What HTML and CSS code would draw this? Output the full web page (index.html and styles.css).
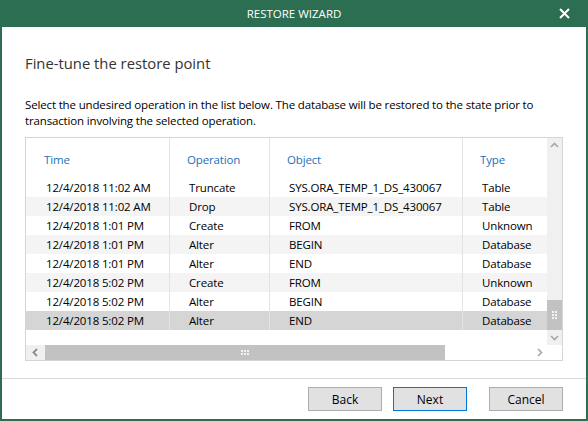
FILE: index.html
```html
<!DOCTYPE html>
<html lang="en">

<head>
    <meta charset="UTF-8">
    <title>Restore Wizard</title>
    <link rel="stylesheet" href="styles.css">
</head>

<body>
    <div class="window">
        <header class="titlebar">
            <span class="title">RESTORE WIZARD</span>
            <span class="close">
                <svg width="11" height="11" viewBox="0 0 11 11"><path d="M1 1 L10 10 M10 1 L1 10" stroke="#fff" stroke-width="2"/></svg>
            </span>
        </header>

        <div class="content">
            <h1 class="heading">Fine-tune the restore point</h1>
            <p class="desc">Select the undesired operation in the list below. The database will be restored to the state prior to<br>transaction involving the selected operation.</p>

            <div class="listbox">
                <div class="list-main">
                    <div class="grid">
                        <div class="hcell">Time</div>
                        <div class="hcell sep">Operation</div>
                        <div class="hcell sep">Object</div>
                        <div class="hcell sep">Type</div>

                        <div class="cell">12/4/2018 11:02 AM</div>
                        <div class="cell sep">Truncate</div>
                        <div class="cell sep">SYS.ORA_TEMP_1_DS_430067</div>
                        <div class="cell sep">Table</div>

                        <div class="cell alt">12/4/2018 11:02 AM</div>
                        <div class="cell sep alt">Drop</div>
                        <div class="cell sep alt">SYS.ORA_TEMP_1_DS_430067</div>
                        <div class="cell sep alt">Table</div>

                        <div class="cell">12/4/2018 1:01 PM</div>
                        <div class="cell sep">Create</div>
                        <div class="cell sep">FROM</div>
                        <div class="cell sep">Unknown</div>

                        <div class="cell alt">12/4/2018 1:01 PM</div>
                        <div class="cell sep alt">Alter</div>
                        <div class="cell sep alt">BEGIN</div>
                        <div class="cell sep alt">Database</div>

                        <div class="cell">12/4/2018 1:01 PM</div>
                        <div class="cell sep">Alter</div>
                        <div class="cell sep">END</div>
                        <div class="cell sep">Database</div>

                        <div class="cell alt">12/4/2018 5:02 PM</div>
                        <div class="cell sep alt">Create</div>
                        <div class="cell sep alt">FROM</div>
                        <div class="cell sep alt">Unknown</div>

                        <div class="cell">12/4/2018 5:02 PM</div>
                        <div class="cell sep">Alter</div>
                        <div class="cell sep">BEGIN</div>
                        <div class="cell sep">Database</div>

                        <div class="cell selected">12/4/2018 5:02 PM</div>
                        <div class="cell sep selected">Alter</div>
                        <div class="cell sep selected">END</div>
                        <div class="cell sep selected">Database</div>
                    </div>

                    <div class="vscroll">
                        <svg class="arrow" width="15" height="15" viewBox="0 0 15 15"><path d="M4 9 L7.5 5.5 L11 9" fill="none" stroke="#a6a6a6" stroke-width="1.6"/></svg>
                        <div class="vtrack">
                            <div class="vthumb">
                                <div class="grip grip-v"><i></i><i></i><i></i><i></i><i></i><i></i></div>
                            </div>
                        </div>
                        <svg class="arrow" width="15" height="15" viewBox="0 0 15 15"><path d="M4 6 L7.5 9.5 L11 6" fill="none" stroke="#a6a6a6" stroke-width="1.6"/></svg>
                    </div>
                </div>

                <div class="hscroll">
                    <svg class="arrow harrow-left" width="19" height="15" viewBox="0 0 19 15"><path d="M11 4 L7.5 7.5 L11 11" fill="none" stroke="#8c8c8c" stroke-width="1.8"/></svg>
                    <div class="hthumb">
                        <div class="grip grip-h"><i></i><i></i><i></i><i></i><i></i><i></i></div>
                    </div>
                    <div class="htrack"></div>
                    <svg class="arrow" width="15" height="15" viewBox="0 0 15 15"><path d="M6 4 L9.5 7.5 L6 11" fill="none" stroke="#a6a6a6" stroke-width="1.6"/></svg>
                    <div class="corner"></div>
                </div>
            </div>
        </div>

        <footer class="footer">
            <button class="btn">Back</button>
            <button class="btn btn-default">Next</button>
            <button class="btn btn-cancel">Cancel</button>
        </footer>
    </div>
</body>

</html>
```

FILE: styles.css
```css
:root {
    --green: #2b6e52;
    --header-blue: #1e6fba;
    --line: #e3e3e3;
    --ui-font: 'Segoe UI', 'Open Sans', 'Noto Sans', sans-serif;
}

* {
    box-sizing: border-box;
    margin: 0;
    padding: 0;
}

body {
    width: 588px;
    height: 421px;
    font-family: var(--ui-font);
    font-size: 11.5px;
    letter-spacing: -0.15px;
    color: #000;
    background: #fff;
    overflow: hidden;
}

.window {
    width: 588px;
    height: 421px;
    display: flex;
    flex-direction: column;
    background: #fff;
    border: 2px solid var(--green);
    border-top: none;
}

.titlebar {
    height: 27px;
    flex-shrink: 0;
    margin: 0 -2px;
    background-color: var(--green);
    color: #fff;
    display: flex;
    align-items: center;
    justify-content: center;
    position: relative;
}

.title {
    font-size: 11.5px;
    letter-spacing: 0;
}

.close {
    position: absolute;
    right: 18px;
    top: 8px;
    line-height: 0;
}

.content {
    flex: 1;
    padding: 0 23px;
}

.heading {
    font-size: 14.8px;
    font-weight: normal;
    line-height: 20px;
    letter-spacing: 0;
    color: #333;
    margin-top: 26px;
}

.desc {
    line-height: 16px;
    margin-top: 24px;
    white-space: nowrap;
}

/* list box */
.listbox {
    margin-top: 8px;
    width: 538px;
    height: 224px;
    border: 1px solid #d5d5d5;
    display: flex;
    flex-direction: column;
}

.list-main {
    flex: 1;
    display: flex;
}

.grid {
    width: 521px;
    display: grid;
    grid-template-columns: 143px 100px 193px 85px;
    grid-template-rows: 40px repeat(8, 19px);
    align-content: start;
}

.hcell {
    color: var(--header-blue);
    padding: 2px 0 0 18px;
    display: flex;
    align-items: center;
}

.cell {
    padding-left: 20px;
    line-height: 19px;
    white-space: nowrap;
    overflow: hidden;
}

.sep {
    border-left: 1px solid var(--line);
}

.hcell.sep {
    padding-left: 17px;
}

.cell.sep {
    padding-left: 19px;
}

.alt {
    background-color: #f4f4f4;
}

.selected {
    background-color: #d5d5d5;
}

.vscroll {
    width: 15px;
    background-color: #f0f0f0;
    display: flex;
    flex-direction: column;
}

.arrow {
    display: block;
    flex-shrink: 0;
}

.vtrack {
    flex: 1;
    display: flex;
    flex-direction: column;
    justify-content: flex-end;
}

.vthumb {
    height: 30px;
    background-color: #c2c2c2;
    display: flex;
    align-items: center;
    justify-content: center;
}

.hscroll {
    height: 15px;
    display: flex;
}

.harrow-left {
    background-color: #f0f0f0;
}

.hthumb {
    width: 400px;
    background-color: #c2c2c2;
    display: flex;
    align-items: center;
    justify-content: center;
}

.htrack {
    flex: 1;
}

.corner {
    width: 15px;
    background: #fff;
}

.grip {
    display: grid;
    gap: 1px;
}

.grip i {
    width: 2px;
    height: 2px;
    background: #f2f2f2;
}

.grip-h {
    grid-template-columns: repeat(3, 2px);
}

.grip-v {
    grid-template-columns: repeat(2, 2px);
}

/* footer */
.footer {
    height: 41px;
    flex-shrink: 0;
    border-top: 1px solid #d9d9d9;
    display: flex;
    justify-content: flex-end;
    align-items: flex-start;
    padding: 8px 23px 0 0;
}

.btn {
    width: 74px;
    height: 24px;
    flex-shrink: 0;
    font-family: var(--ui-font);
    font-size: 12px;
    color: #000;
    background-color: #e1e1e1;
    border: 1px solid #adadad;
    margin-left: 11px;
}

.btn-default {
    border: 1px solid #0078d7;
}

.btn-cancel {
    margin-left: 22px;
}
```
